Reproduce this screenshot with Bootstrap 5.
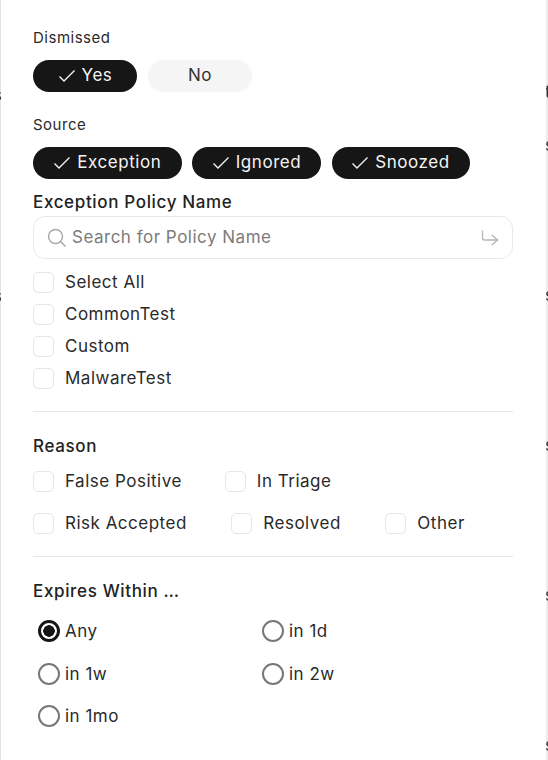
<!DOCTYPE html>
<html lang="en">
<head>
<meta charset="utf-8">
<title>Filters</title>
<link rel="stylesheet" href="https://cdn.jsdelivr.net/npm/bootstrap@5.3.0/dist/css/bootstrap.min.css">
<style>
html,body{height:760px;overflow:hidden;background:#ececec}
body{font-family:Inter,"Liberation Sans",sans-serif;color:#1f1f1f;position:relative}
.filter-panel{width:546px;height:760px;padding:29px 33px 0 32px;border-left:1px solid #e4e4e4;background:#fff;box-sizing:border-box}
.small-head{font-size:15px;line-height:18px;color:#2a2a2a;margin-bottom:13px;letter-spacing:.5px}
.big-head{font-size:17px;font-weight:500;line-height:22px;letter-spacing:.65px;color:#222}
.pill{height:32px;border-radius:16px;font-size:17px;line-height:30px;padding:0 0 2px;border:0;display:flex;align-items:center;justify-content:center;gap:6px;letter-spacing:.55px}
.pill svg{margin-top:2px}
.pill-on{background:#161616;color:#f4f4f4}
.pill-off{background:#f5f5f5;color:#333}
.w-yes,.w-no{width:104px}
.w-exc{width:148.5px}.w-ign{width:129px}.w-sno{width:138px}
.gap-pills{gap:10.5px}
.search-box{height:43px;border:1px solid #e8e8e8;border-radius:12px;padding:0 13px;margin-top:4px;color:#777;font-size:17px}
.search-box input{border:0;outline:0;flex:1;font:inherit;padding:1px 0 0;color:#777;min-width:0;letter-spacing:.5px}
.search-box input::placeholder{color:#7b7b7b;opacity:1}
.opt{display:flex;align-items:center;font-size:17px;line-height:22px;color:#2a2a2a;letter-spacing:.5px}
.form-check-input.box{width:21px;height:21px;margin:0 11px 0 0;border:1px solid #e6e6e6;border-radius:5px;flex:none}
.opt-stack{margin-top:12px;display:flex;flex-direction:column;gap:10px}
.rule{height:1px;background:#e6e6e6;margin:0;opacity:1;border:0}
.form-check-input.dot{width:22px;height:22px;margin:0 5px 0 0;border:2px solid #777;background-color:#fff;flex:none}
.form-check-input.dot:checked{border:3px solid #161616;background:radial-gradient(circle,#161616 0 5.5px,#fff 6px)}
.dot-grid{display:grid;grid-template-columns:224px 224px;row-gap:20.5px;padding-left:5px;margin-top:18px}
.sliver{position:absolute;font-size:17px;line-height:20px;color:#333;overflow:hidden;width:2px;height:20px;will-change:transform}
.sl-r{left:546px;text-indent:-1px;z-index:2}
.sl-l{left:0;width:1px;text-indent:-7px;z-index:2}
</style>
</head>
<body>
<div class="filter-panel">
  <div class="small-head">Dismissed</div>
  <div class="d-flex" style="gap:11px">
    <button type="button" class="pill pill-on w-yes"><svg width="18" height="14" viewBox="0 0 18 14" fill="none" stroke="#f4f4f4" stroke-width="1.4"><path d="M1.5 7.5l4.5 4.5L16.500 1.500"/></svg>Yes</button>
    <button type="button" class="pill pill-off w-no">No</button>
  </div>
  <div class="small-head" style="margin-top:24px">Source</div>
  <div class="d-flex gap-pills">
    <button type="button" class="pill pill-on w-exc"><svg width="18" height="14" viewBox="0 0 18 14" fill="none" stroke="#f4f4f4" stroke-width="1.4"><path d="M1.5 7.5l4.5 4.500L16.500 1.500"/></svg>Exception</button>
    <button type="button" class="pill pill-on w-ign"><svg width="18" height="14" viewBox="0 0 18 14" fill="none" stroke="#f4f4f4" stroke-width="1.4"><path d="M1.5 7.5l4.5 4.500L16.500 1.500"/></svg>Ignored</button>
    <button type="button" class="pill pill-on w-sno"><svg width="18" height="14" viewBox="0 0 18 14" fill="none" stroke="#f4f4f4" stroke-width="1.4"><path d="M1.5 7.5l4.5 4.500L16.500 1.500"/></svg>Snoozed</button>
  </div>
  <div class="big-head" style="margin-top:12px">Exception Policy Name</div>
  <div class="search-box d-flex align-items-center" style="gap:5px;margin-top:3px">
    <svg width="20" height="20" viewBox="0 0 20 20" fill="none" stroke="#a6a6a6" stroke-width="1.4"><circle cx="8.500" cy="8.500" r="7"/><path d="M13.500 13.500l5 5"/></svg>
    <input type="text" placeholder="Search for Policy Name" aria-label="Search for Policy Name">
    <svg width="18" height="18" viewBox="0 0 18 18" fill="none" stroke="#b5b5b5" stroke-width="1.3"><path d="M1.500 1.500v7.500q0 2 2 2h13"/><path d="M11 6l5.500 5-5.500 5"/></svg>
  </div>
  <div class="opt-stack">
    <label class="opt"><input class="form-check-input box" type="checkbox">Select All</label>
    <label class="opt"><input class="form-check-input box" type="checkbox">CommonTest</label>
    <label class="opt"><input class="form-check-input box" type="checkbox">Custom</label>
    <label class="opt"><input class="form-check-input box" type="checkbox">MalwareTest</label>
  </div>
  <hr class="rule" style="margin-top:22px">
  <div class="big-head" style="margin-top:23px">Reason</div>
  <div class="d-flex" style="margin-top:13px;gap:43px">
    <label class="opt"><input class="form-check-input box" type="checkbox">False Positive</label>
    <label class="opt"><input class="form-check-input box" type="checkbox">In Triage</label>
  </div>
  <div class="d-flex" style="margin-top:20px;gap:44.500px">
    <label class="opt"><input class="form-check-input box" type="checkbox">Risk Accepted</label>
    <label class="opt"><input class="form-check-input box" type="checkbox">Resolved</label>
    <label class="opt"><input class="form-check-input box" type="checkbox">Other</label>
  </div>
  <hr class="rule" style="margin-top:22px">
  <div class="big-head" style="margin-top:23px">Expires Within …</div>
  <div class="dot-grid">
    <label class="opt"><input class="form-check-input dot" type="radio" name="exp" checked>Any</label>
    <label class="opt"><input class="form-check-input dot" type="radio" name="exp">in 1d</label>
    <label class="opt"><input class="form-check-input dot" type="radio" name="exp">in 1w</label>
    <label class="opt"><input class="form-check-input dot" type="radio" name="exp">in 2w</label>
    <label class="opt"><input class="form-check-input dot" type="radio" name="exp">in 1mo</label>
  </div>
</div>
<span class="sliver sl-r" style="top:82px">t</span>
<span class="sliver sl-r" style="top:135px">s</span>
<span class="sliver sl-r" style="top:285px">s</span>
<span class="sliver sl-r" style="top:435px">s</span>
<span class="sliver sl-r" style="top:585px">s</span>
<span class="sliver sl-r" style="top:735px">s</span>
<span class="sliver sl-l" style="top:85px">s</span>
<span class="sliver sl-l" style="top:286px">s</span>
<span class="sliver sl-l" style="top:436px">j</span>
<script src="https://cdn.jsdelivr.net/npm/bootstrap@5.3.0/dist/js/bootstrap.bundle.min.js"></script>
</body>
</html>
